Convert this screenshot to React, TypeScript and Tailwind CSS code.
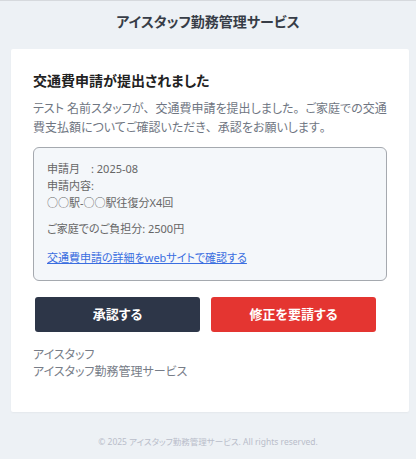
// 交通費申請通知メール — アイスタッフ勤務管理サービス
// 句読点だけは全角幅のまま（palt を外す）
function P({ c }: { c: string }) {
  return <span className="[font-feature-settings:normal]">{c}</span>;
}

export default function App() {
  return (
    <div className="min-h-[459px] bg-[#edf1f5] border-t border-[#d6d9dd] font-['Noto_Sans','Noto_Sans_CJK_JP',sans-serif] [font-feature-settings:'palt']">
      {/* ヘッダー */}
      <div className="h-[48px] flex items-center justify-center pb-[8px]">
        <h1 className="text-[14px] font-bold text-[#373d47]">アイスタッフ勤務管理サービス</h1>
      </div>

      {/* 本文カード */}
      <div className="ml-[11px] w-[398px] bg-white rounded-[2px] shadow-[0_1px_2px_rgba(0,0,0,0.04)] px-[22px] pt-[22px] pb-[32px]">
        <h2 className="text-[14px] font-bold text-[#222] leading-[20px]">交通費申請が提出されました</h2>
        <p className="mt-[8px] text-[12px] leading-[19px] text-[#6f7682]">
          テスト 名前スタッフが<P c="、" />交通費申請を提出しました<P c="。" />ご家庭での交通費支払額についてご確認いただき<P c="、" />承認をお願いします<P c="。" />
        </p>

        {/* 申請内容 */}
        <div className="mt-[10px] bg-[#f4f7fa] border border-[#a5a9af] rounded-[6px] px-[13px] pt-[12px] pb-[14px] text-[11px] leading-[17px] text-[#666]">
          <div>申請月　: 2025-08</div>
          <div>申請内容:</div>
          <div className="[font-feature-settings:normal]">○○駅-○○駅往復分X4回</div>
          <div className="mt-[9px]">ご家庭でのご負担分: 2500円</div>
          <a href="#" className="block mt-[12px] text-[#3a6ee0] underline">交通費申請の詳細をwebサイトで確認する</a>
        </div>

        {/* ボタン */}
        <div className="mt-[16px] flex gap-[11px] px-[2px]">
          <button className="w-[165px] h-[35px] rounded-[3px] bg-[#2d3648] text-white text-[13px] font-bold">承認する</button>
          <button className="w-[165px] h-[35px] rounded-[3px] bg-[#e43531] text-white text-[13px] font-bold">修正を要請する</button>
        </div>

        <div className="mt-[14px] text-[12px] leading-[17px] text-[#777d88]">
          <div>アイスタッフ</div>
          <div>アイスタッフ勤務管理サービス</div>
        </div>
      </div>

      {/* フッター */}
      <div className="pt-[24px] text-center text-[8.5px] text-[#b9bdca]">
        © 2025 アイスタッフ勤務管理サービス. All rights reserved.
      </div>
    </div>
  );
}
